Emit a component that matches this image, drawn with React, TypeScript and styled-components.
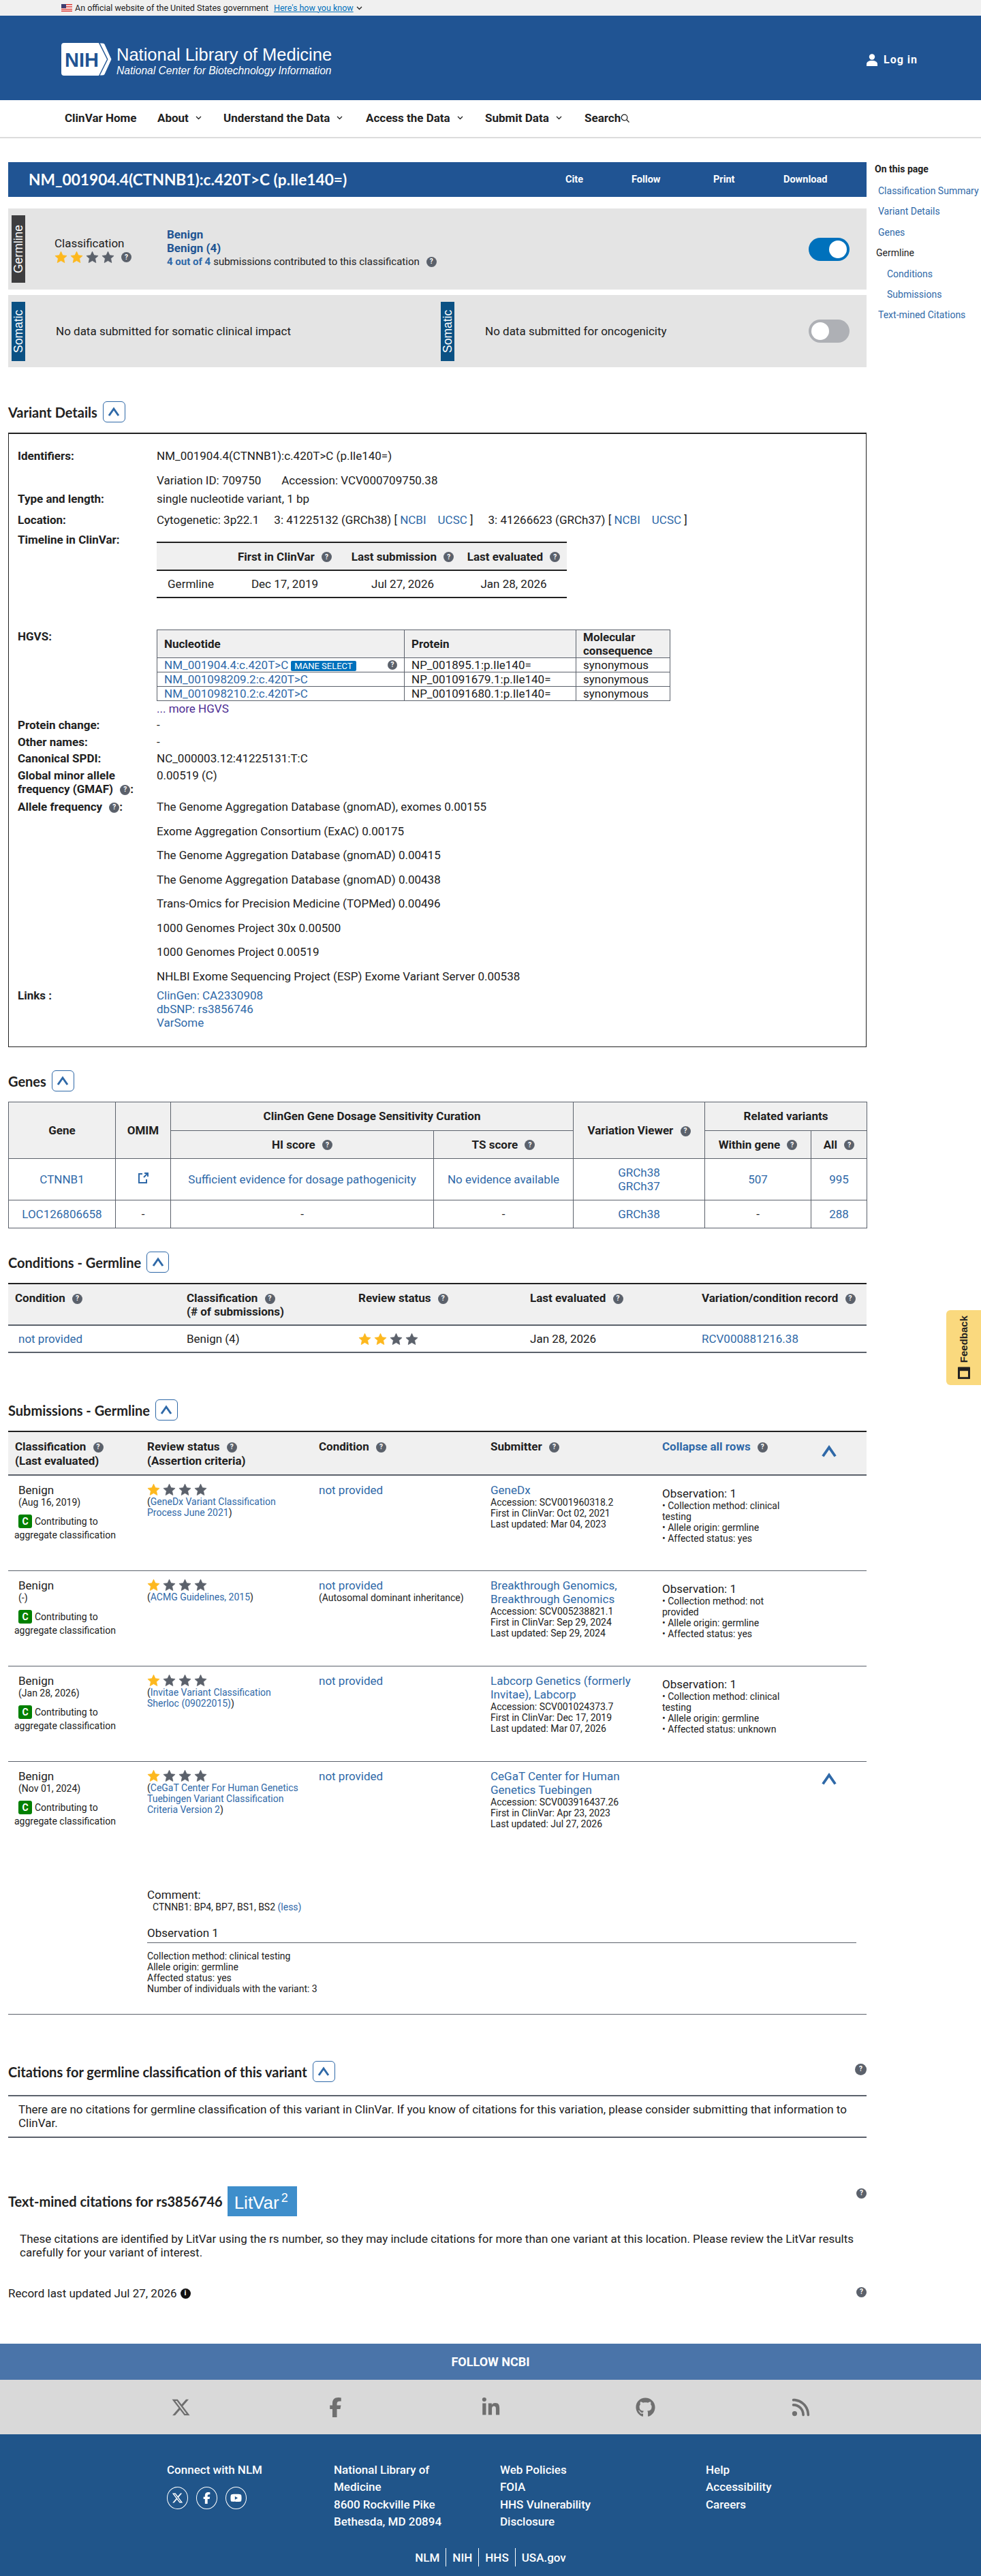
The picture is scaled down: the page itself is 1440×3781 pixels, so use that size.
import React from "react";
import styled, { createGlobalStyle } from "styled-components";
import { FaXTwitter, FaFacebookF, FaLinkedinIn, FaGithub, FaRss, FaYoutube } from "react-icons/fa6";

const GlobalStyle = createGlobalStyle`
  html, body { margin: 0; padding: 0; background: #fff; }
  body { font-family: Roboto, "Liberation Sans", sans-serif; font-size: 17px; line-height: 20px; color: #212121; }
  a { color: #2f69a8; text-decoration: none; }
  * { box-sizing: border-box; }
  table { border-collapse: collapse; }
`;

const Page = styled.div`
  position: relative;
  width: 1440px;
  height: 3781px;
  overflow: hidden;
`;

/* top of page */
const GovBanner = styled.div`
  height: 23px;
  background: #f0f0f0;
  padding-left: 90px;
  display: flex;
  align-items: center;
  gap: 4px;
  font-size: 12.5px;
  a { text-decoration: underline; color: #0071bc; margin-left: 4px; }
`;
const Header = styled.header`
  height: 124px;
  background: #205493;
  padding: 40px 93px 0 90px;
  display: flex;
  justify-content: space-between;
  color: #fff;
`;
const Brand = styled.div`
  display: flex;
  gap: 7px;
`;
const BrandText = styled.div`
  font-family: "Liberation Sans", Arial, sans-serif;
  padding-top: 3px;
`;
const BrandTitle = styled.div`
  font-size: 25.5px;
  line-height: 29px;
`;
const BrandSub = styled.div`
  font-size: 15.6px;
  line-height: 18px;
  font-style: italic;
`;
const Login = styled.div`
  display: flex;
  align-items: center;
  gap: 8px;
  height: 50px;
  font-weight: 700;
  font-size: 16px;
  letter-spacing: 1px;
`;
const Nav = styled.nav`
  height: 56px;
  border-bottom: 2px solid #dcdcdc;
  padding-left: 95px;
  display: flex;
  align-items: center;
  font-size: 17px;
  font-weight: 700;
  padding-bottom: 2px;
`;
const NavItem = styled.span<{ $w: number; $gap?: number }>`
  width: ${(p) => p.$w}px;
  display: inline-flex;
  align-items: center;
  gap: ${(p) => p.$gap ?? 10}px;
  color: #212121;
`;

/* main layout */
const Main = styled.div`
  display: grid;
  grid-template-columns: 1260px 156px;
  column-gap: 12px;
  padding: 35px 0 0 12px;
`;
const Content = styled.main`
  min-width: 0;
`;
const Side = styled.aside`
  font-size: 14px;
  white-space: nowrap;
`;
const SideTitle = styled.div`
  font-weight: 700;
  color: #212121;
  height: 20px;
  margin-bottom: 12px;
`;
const SideLink = styled.a<{ $indent: number }>`
  display: block;
  height: 30.4px;
  padding-left: ${(p) => p.$indent}px;
`;
const SidePlain = styled.div`
  height: 30.4px;
  padding-left: 2px;
`;

const TitleBar = styled.div`
  height: 51px;
  background: #205493;
  color: #fff;
  display: flex;
  align-items: center;
  padding-left: 30px;
`;
const Title = styled.h1`
  margin: 0;
  width: 788px;
  font-family: Lato, "Noto Sans", sans-serif;
  font-size: 22.7px;
  font-weight: 700;
`;
const TitleAction = styled.span<{ $w: number }>`
  width: ${(p) => p.$w}px;
  font-size: 14.5px;
  font-weight: 700;
`;

const Card = styled.section<{ $h: number; $top: number }>`
  position: relative;
  height: ${(p) => p.$h}px;
  margin-top: ${(p) => p.$top}px;
  background: #e4e4e4;
  display: flex;
  align-items: center;
  padding: 0 25px 0 5px;
`;
const SideTag = styled.div<{ $bg: string; $h: number }>`
  width: 20px;
  height: ${(p) => p.$h}px;
  flex: none;
  background: ${(p) => p.$bg};
  color: #fff;
  writing-mode: vertical-rl;
  transform: rotate(180deg);
  text-align: center;
  font-family: "Liberation Sans", Arial, sans-serif;
  font-size: 17.5px;
  line-height: 20px;
`;
const ClassBlock = styled.div`
  width: 165px;
  margin-left: 43px;
  margin-top: 2px;
`;
const ClassLabel = styled.div`
  font-size: 17px;
  line-height: 22px;
`;
const SummaryBlock = styled.div`
  flex: 1;
  margin-top: -3px;
`;
const SummaryStrong = styled.div`
  font-size: 17px;
  font-weight: 700;
  color: #205493;
  line-height: 20px;
`;
const SummaryLine = styled.div`
  display: flex;
  align-items: center;
  gap: 4px;
  font-size: 15px;
  b { color: #2f69a8; }
`;
const Toggle = styled.div<{ $on: boolean }>`
  width: 60px;
  height: 34px;
  border-radius: 17px;
  flex: none;
  display: flex;
  align-items: center;
  padding: 0 4px;
  justify-content: ${(p) => (p.$on ? "flex-end" : "flex-start")};
  background: ${(p) => (p.$on ? "#0071bc" : "#aeb0b5")};
  &::after {
    content: "";
    width: 26px;
    height: 26px;
    border-radius: 50%;
    background: #fff;
  }
`;
const NoData = styled.div<{ $w: number }>`
  margin-left: 45px;
  width: ${(p) => p.$w}px;
`;

/* shared bits */
const HelpDot = styled.span<{ $s?: number }>`
  display: inline-flex;
  width: ${(p) => p.$s ?? 15}px;
  height: ${(p) => p.$s ?? 15}px;
  flex: none;
  border-radius: 50%;
  background: #5b616b;
  color: #fff;
  font-family: Roboto, sans-serif;
  font-size: 10px;
  font-weight: 700;
  line-height: 1;
  align-items: center;
  justify-content: center;
  vertical-align: 2px;
  margin-left: 6px;
`;
const Help = ({ s }: { s?: number }) => <HelpDot $s={s}>?</HelpDot>;

const StarRow = styled.div`
  display: flex;
  align-items: center;
  gap: 4px;
  height: 19px;
`;
const Star = ({ on }: { on: boolean }) => (
  <svg width="19" height="19" viewBox="0 0 24 24">
    <path
      d="M12 1.5l3.2 7 7.6.9-5.6 5.200 1.500 7.600L12 18.400l-6.700 3.800 1.500-7.600L1.200 9.400l7.600-.9z"
      fill={on ? "#fdb81e" : "#5b616b"}
      stroke={on ? "#fdb81e" : "#5b616b"}
      strokeLinejoin="round"
    />
  </svg>
);
const Stars = ({ n }: { n: number }) => (
  <>
    {[0, 1, 2, 3].map((i) => (
      <Star key={i} on={i < n} />
    ))}
  </>
);

const SectionHead = styled.div<{ $top: number }>`
  display: flex;
  align-items: center;
  height: 31px;
  margin-top: ${(p) => p.$top}px;
  position: relative;
`;
const SectionTitle = styled.h2`
  margin: 0;
  font-family: Lato, "Noto Sans", sans-serif;
  font-size: 20px;
  font-weight: 700;
  color: #212121;
`;
const CollapseBtn = styled.span`
  width: 33px;
  height: 31px;
  margin-left: 8px;
  border: 1px solid #2f69a8;
  border-radius: 6px;
  display: flex;
  align-items: center;
  justify-content: center;
`;
const Chevron = ({ size = 20 }: { size?: number }) => (
  <svg width={size} height={size} viewBox="0 0 20 20" fill="none">
    <path d="M3 15L10 5l7 10" stroke="#2f69a8" strokeWidth="3" />
  </svg>
);
const Collapse = () => (
  <CollapseBtn>
    <Chevron />
  </CollapseBtn>
);
const CornerHelp = styled.span<{ $top: number }>`
  position: absolute;
  right: 0;
  top: ${(p) => p.$top}px;
`;

/* variant details */
const DetailBox = styled.div`
  margin-top: 15px;
  height: 902px;
  border: 1px solid #212121;
  border-top-width: 2px;
  padding: 22px 0 0 13px;
`;
const DetailRow = styled.div<{ $top?: number }>`
  display: grid;
  grid-template-columns: 204px 1fr;
  margin-top: ${(p) => p.$top ?? 0}px;
`;
const DetailLabel = styled.div`
  font-weight: 700;
`;
const Spaced = styled.div<{ $gap: number }>`
  display: flex;
  flex-direction: column;
  gap: ${(p) => p.$gap}px;
`;
const Gapped = styled.span<{ $w: number }>`
  display: inline-block;
  width: ${(p) => p.$w}px;
`;
const TimelineTable = styled.table`
  margin-top: 13px;
  width: 602px;
  table-layout: fixed;
  border-top: 2px solid #212121;
  border-bottom: 2px solid #212121;
  th { background: #f0f0f0; height: 41px; font-weight: 700; text-align: center; padding: 0; white-space: nowrap; }
  tr:first-child { border-bottom: 2px solid #212121; }
  td { height: 40px; text-align: center; padding: 0; }
`;
const HgvsTable = styled.table`
  width: 753px;
  table-layout: fixed;
  th, td { border: 1px solid #5b616b; padding: 0 10px; text-align: left; height: 21px; line-height: 20px; white-space: nowrap; }
  th { background: #f0f0f0; height: 41px; white-space: normal; }
`;
const ManeCell = styled.div`
  display: flex;
  align-items: center;
  justify-content: space-between;
`;
const Mane = styled.span`
  background: #0071bc;
  color: #fff;
  font-size: 13px;
  line-height: 15px;
  padding: 0 5px;
  margin-left: 4px;
  border-radius: 2px;
  display: inline-block;
`;
const MoreLink = styled.a`
  color: #4c2c92;
  display: block;
  height: 20px;
  margin-top: 1px;
`;

/* genes and conditions */
const GenesTable = styled.table`
  margin-top: 15px;
  width: 1260px;
  table-layout: fixed;
  border: 1px solid #5b616b;
  th, td { border: 1px solid #5b616b; text-align: center; padding: 0; }
  th { background: #f0f0f0; font-weight: 700; white-space: nowrap; }
  thead tr { height: 41.500px; }
`;
const ViewerLink = styled.a`
  display: block;
`;
const ConditionsTable = styled.table`
  margin-top: 15px;
  width: 1260px;
  table-layout: fixed;
  border-top: 2px solid #212121;
  border-bottom: 2px solid #5b616b;
  th { background: #f0f0f0; text-align: left; vertical-align: top; padding: 10px 10px 0; height: 61px; font-weight: 700; border-bottom: 2px solid #5b616b; white-space: nowrap; }
  td { height: 40px; padding: 0 10px; }
  td:first-child { padding-left: 15px; }
`;
const Feedback = styled.div`
  position: absolute;
  left: 1389px;
  top: 1923px;
  width: 51px;
  height: 110px;
  background: #fad97e;
  border-radius: 6px 0 0 6px;
  display: flex;
  align-items: center;
  justify-content: center;
  writing-mode: vertical-rl;
  font-family: "Liberation Sans", Arial, sans-serif;
  font-weight: 700;
  font-size: 15px;
  color: #212121;
`;
const FeedbackInner = styled.span`
  transform: rotate(180deg);
  display: inline-flex;
  align-items: center;
  gap: 6px;
`;

/* submissions */
const SubHeader = styled.div`
  margin-top: 15px;
  height: 66px;
  background: #f0f0f0;
  border-top: 2px solid #212121;
  border-bottom: 2px solid #5b616b;
  font-weight: 700;
  display: grid;
  grid-template-columns: 204px 252px 252px 252px 1fr;
  padding-top: 11px;
  position: relative;
`;
const SubHeadCell = styled.div<{ $pad?: number }>`
  padding-left: ${(p) => p.$pad ?? 0}px;
  line-height: 21px;
  white-space: nowrap;
`;
const CollapseAll = styled.a`
  font-weight: 700;
`;
const RowChevron = styled.span<{ $top: number }>`
  position: absolute;
  left: 1192px;
  top: ${(p) => p.$top}px;
`;
const SubRow = styled.div<{ $h: number }>`
  position: relative;
  height: ${(p) => p.$h}px;
  border-bottom: 1px solid #5b616b;
  padding-top: 11px;
`;
const SubGrid = styled.div`
  display: grid;
  grid-template-columns: 204px 252px 252px 252px 1fr;
`;
const ClassCell = styled.div`
  padding-left: 9px;
  font-size: 14px;
`;
const BenignLine = styled.div`
  padding-left: 6px;
  font-size: 17px;
  line-height: 20px;
`;
const DateLine = styled.div`
  padding-left: 6px;
  font-size: 14px;
  line-height: 16px;
`;
const BadgeRow = styled.div`
  display: flex;
  align-items: center;
  gap: 4px;
  height: 20px;
  margin: 10px 0 0 6px;
`;
const Badge = styled.span`
  width: 20px;
  height: 20px;
  border-radius: 3px;
  background: #008000;
  color: #fff;
  font-weight: 700;
  text-align: center;
  line-height: 20px;
`;
const BadgeTail = styled.div`
  line-height: 21px;
`;
const SmallBlock = styled.div<{ $w?: number }>`
  font-size: 14px;
  line-height: 16px;
  width: ${(p) => (p.$w ? `${p.$w}px` : "auto")};
`;
const SubmitterLink = styled.a`
  display: block;
  line-height: 20px;
  width: 215px;
`;
const CondLink = styled.a`
  display: block;
  height: 20px;
`;
const Observation = styled.div`
  font-size: 14px;
  line-height: 16px;
  width: 190px;
  padding-top: 5px;
  h4 { margin: 0; font-size: 17px; font-weight: 400; line-height: 20px; }
`;
const Expanded = styled.div`
  margin: 86px 15px 0 204px;
`;
const CommentTitle = styled.div`
  line-height: 20px;
`;
const CommentBody = styled.div`
  font-size: 14px;
  line-height: 16px;
  padding-left: 8px;
`;
const ObsTitle = styled.div`
  line-height: 20px;
  margin-top: 20px;
  padding-bottom: 4px;
  border-bottom: 1px solid #5b616b;
`;
const ObsLines = styled.div`
  font-size: 14px;
  line-height: 16px;
  margin-top: 11px;
`;

/* citations */
const Rule = styled.div`
  border-top: 2px solid #5b616b;
  border-bottom: 2px solid #5b616b;
  margin-top: 19px;
  height: 63px;
  padding: 9px 15px;
`;
const LitHead = styled.div`
  display: flex;
  align-items: center;
  height: 44px;
  margin-top: 71px;
  position: relative;
`;
const LitVar = styled.div`
  margin-left: 7px;
  width: 102px;
  height: 44px;
  background: #3e8ecb;
  color: #fff;
  font-family: "Liberation Sans", Arial, sans-serif;
  font-size: 26px;
  line-height: 48px;
  padding-left: 10px;
  white-space: nowrap;
  sup { font-size: 18px; line-height: 0; vertical-align: 10px; margin-left: 3px; }
`;
const LitText = styled.p`
  margin: 23px 0 0;
  padding-left: 17px;
`;
const Updated = styled.div`
  position: relative;
  margin-top: 40px;
  display: flex;
  align-items: center;
`;
const InfoDot = styled.span`
  width: 15px;
  height: 15px;
  margin-left: 5px;
  background: #111;
  color: #fff;
  border-radius: 50%;
  font-size: 11px;
  font-weight: 700;
  display: flex;
  align-items: center;
  justify-content: center;
`;

/* footer */
const Footer = styled.footer`
  position: absolute;
  left: 0;
  right: 0;
  top: 3440px;
`;
const FollowBand = styled.div`
  height: 53px;
  background: #4a74a9;
  color: #fff;
  font-size: 18px;
  font-weight: 700;
  display: flex;
  align-items: center;
  justify-content: center;
`;
const SocialBand = styled.div`
  height: 80px;
  background: #d9d9d9;
  display: grid;
  grid-template-columns: repeat(5, 227.500px);
  justify-content: center;
  align-items: center;
  justify-items: center;
  color: #6f6f6f;
  font-size: 29px;
`;
const NlmFooter = styled.div`
  height: 208px;
  background: #20558a;
  color: #fff;
  padding: 40px 0 0 245px;
  font-weight: 500;
`;
const FooterCols = styled.div`
  display: grid;
  grid-template-columns: 245px 244px 302px 200px;
  line-height: 25.300px;
`;
const AddressCol = styled.div`
  width: 190px;
`;
const CircleRow = styled.div`
  display: flex;
  gap: 12px;
  margin-top: 12px;
`;
const Circle = styled.span`
  width: 31px;
  height: 33px;
  border: 1px solid #fff;
  border-radius: 50%;
  display: flex;
  align-items: center;
  justify-content: center;
  font-size: 17px;
`;
const BottomLinks = styled.div`
  margin: 26px 0 0 -245px;
  display: flex;
  justify-content: center;
  span { padding: 3px 9px; height: 27px; border-left: 1px solid #fff; line-height: 22px; }
  span:first-child { border-left: 0; }
`;

const NihLogo = () => (
  <svg width="74" height="48" viewBox="0 0 74 48">
    <path d="M4 0h51l-.1.1L67 24 55 48H4a4 4 0 0 1-4-4V4a4 4 0 0 1 4-4z" fill="#fff" />
    <path d="M56 0h4c2 0 3 1 4 2l10 22-10 22c-1 1-2 2-4 2h-4l12-24z" fill="#fff" stroke="#205493" strokeWidth="1" />
    <text x="5" y="35" fontFamily="Liberation Sans, Arial, sans-serif" fontWeight="700" fontSize="29" fill="#205493">NIH</text>
  </svg>
);
const Flag = () => (
  <svg width="16" height="11" viewBox="0 0 16 11">
    <rect width="16" height="11" fill="#fff" />
    <path d="M0 .8h16M0 4.100h16M0 7.400h16M0 10.200h16" stroke="#d83933" strokeWidth="1.500" />
    <rect width="7" height="6" fill="#3c3b6e" />
  </svg>
);
const Caret = () => (
  <svg width="9" height="6" viewBox="0 0 9 6" fill="none">
    <path d="M1 1l3.500 3.500L8 1" stroke="#212121" strokeWidth="1.300" />
  </svg>
);
const UserIcon = () => (
  <svg width="18" height="18" viewBox="0 0 18 18" fill="#fff">
    <circle cx="9" cy="4.500" r="4.200" />
    <path d="M1 18v-3c0-3 3-5 8-5s8 2 8 5v3z" />
  </svg>
);
const SearchIcon = () => (
  <svg width="13" height="13" viewBox="0 0 13 13" fill="none" stroke="#212121" strokeWidth="1.200">
    <circle cx="5.500" cy="5.500" r="4.300" />
    <path d="M8.500 8.500L12.500 12.500" />
  </svg>
);
const ExternalIcon = () => (
  <svg width="18" height="18" viewBox="0 0 18 18" fill="none" stroke="#2f69a8" strokeWidth="2">
    <path d="M8 3H3v13h11v-5M10 8l6-6M11 2h5v5" />
  </svg>
);
const ChatIcon = () => (
  <svg width="18" height="18" viewBox="0 0 18 18">
    <rect x="0" y="0" width="18" height="18" rx="1" fill="#212121" />
    <rect x="3" y="3" width="12" height="9" fill="#fad97e" />
  </svg>
);

const submissions = [
  {
    date: "(Aug 16, 2019)",
    crit: "GeneDx Variant Classification Process June 2021",
    condNote: "",
    submitter: "GeneDx",
    acc: "SCV001960318.2",
    first: "Oct 02, 2021",
    updated: "Mar 04, 2023",
    method: "clinical testing",
    status: "yes",
  },
  {
    date: "(-)",
    crit: "ACMG Guidelines, 2015",
    condNote: "(Autosomal dominant inheritance)",
    submitter: "Breakthrough Genomics, Breakthrough Genomics",
    acc: "SCV005238821.1",
    first: "Sep 29, 2024",
    updated: "Sep 29, 2024",
    method: "not provided",
    status: "yes",
  },
  {
    date: "(Jan 28, 2026)",
    crit: "Invitae Variant Classification Sherloc (09022015)",
    condNote: "",
    submitter: "Labcorp Genetics (formerly Invitae), Labcorp",
    acc: "SCV001024373.7",
    first: "Dec 17, 2019",
    updated: "Mar 07, 2026",
    method: "clinical testing",
    status: "unknown",
  },
];

const frequencies = [
  "The Genome Aggregation Database (gnomAD), exomes 0.00155",
  "Exome Aggregation Consortium (ExAC) 0.00175",
  "The Genome Aggregation Database (gnomAD) 0.00415",
  "The Genome Aggregation Database (gnomAD) 0.00438",
  "Trans-Omics for Precision Medicine (TOPMed) 0.00496",
  "1000 Genomes Project 30x 0.00500",
  "1000 Genomes Project 0.00519",
  "NHLBI Exome Sequencing Project (ESP) Exome Variant Server 0.00538",
];

const ClassColumn = ({ date }: { date: string }) => (
  <ClassCell>
    <BenignLine>Benign</BenignLine>
    <DateLine>{date}</DateLine>
    <BadgeRow>
      <Badge>C</Badge>
      <span>Contributing to</span>
    </BadgeRow>
    <BadgeTail>aggregate classification</BadgeTail>
  </ClassCell>
);

export default function App() {
  return (
    <Page>
      <GlobalStyle />
      <GovBanner>
        <Flag />
        An official website of the United States government
        <a>Here's how you know</a>
        <Caret />
      </GovBanner>
      <Header>
        <Brand>
          <NihLogo />
          <BrandText>
            <BrandTitle>National Library of Medicine</BrandTitle>
            <BrandSub>National Center for Biotechnology Information</BrandSub>
          </BrandText>
        </Brand>
        <Login>
          <UserIcon />
          Log in
        </Login>
      </Header>
      <Nav>
        <NavItem $w={136}>ClinVar Home</NavItem>
        <NavItem $w={97}>About <Caret /></NavItem>
        <NavItem $w={209}>Understand the Data <Caret /></NavItem>
        <NavItem $w={175}>Access the Data <Caret /></NavItem>
        <NavItem $w={146}>Submit Data <Caret /></NavItem>
        <NavItem $w={90} $gap={0}>Search<SearchIcon /></NavItem>
      </Nav>

      <Main>
        <Content>
          <TitleBar>
            <Title>NM_001904.4(CTNNB1):c.420T&gt;C (p.Ile140=)</Title>
            <TitleAction $w={97}>Cite</TitleAction>
            <TitleAction $w={120}>Follow</TitleAction>
            <TitleAction $w={103}>Print</TitleAction>
            <TitleAction $w={70}>Download</TitleAction>
          </TitleBar>

          <Card $h={119} $top={17}>
            <SideTag $bg="#3d3d3f" $h={99}>Germline</SideTag>
            <ClassBlock>
              <ClassLabel>Classification</ClassLabel>
              <StarRow>
                <Stars n={2} />
                <Help />
              </StarRow>
            </ClassBlock>
            <SummaryBlock>
              <SummaryStrong>Benign</SummaryStrong>
              <SummaryStrong>Benign (4)</SummaryStrong>
              <SummaryLine>
                <b>4 out of 4</b> submissions contributed to this classification <Help />
              </SummaryLine>
            </SummaryBlock>
            <Toggle $on />
          </Card>
          <Card $h={106} $top={8}>
            <SideTag $bg="#0b5184" $h={87}>Somatic</SideTag>
            <NoData $w={565}>No data submitted for somatic clinical impact</NoData>
            <SideTag $bg="#0b5184" $h={87}>Somatic</SideTag>
            <NoData $w={475}>No data submitted for oncogenicity</NoData>
            <Toggle $on={false} />
          </Card>

          <SectionHead $top={50}>
            <SectionTitle>Variant Details</SectionTitle>
            <Collapse />
          </SectionHead>
          <DetailBox>
            <DetailRow>
              <DetailLabel>Identifiers:</DetailLabel>
              <Spaced $gap={16}>
                <div>NM_001904.4(CTNNB1):c.420T&gt;C (p.Ile140=)</div>
                <div>Variation ID: 709750<Gapped $w={30} />Accession: VCV000709750.38</div>
              </Spaced>
            </DetailRow>
            <DetailRow $top={7}>
              <DetailLabel>Type and length:</DetailLabel>
              <div>single nucleotide variant, 1 bp</div>
            </DetailRow>
            <DetailRow $top={11}>
              <DetailLabel>Location:</DetailLabel>
              <div>
                Cytogenetic: 3p22.1<Gapped $w={22} />3: 41225132 (GRCh38) [ <a>NCBI</a><Gapped $w={17} /><a>UCSC</a> ]
                <Gapped $w={22} />3: 41266623 (GRCh37) [ <a>NCBI</a><Gapped $w={17} /><a>UCSC</a> ]
              </div>
            </DetailRow>
            <DetailRow $top={9}>
              <DetailLabel>Timeline in ClinVar:</DetailLabel>
              <TimelineTable>
                <colgroup>
                  <col width="100" /><col width="176" /><col width="170" /><col width="156" />
                </colgroup>
                <tbody>
                  <tr>
                    <th></th>
                    <th>First in ClinVar <Help /></th>
                    <th>Last submission <Help /></th>
                    <th>Last evaluated <Help /></th>
                  </tr>
                  <tr>
                    <td>Germline</td>
                    <td>Dec 17, 2019</td>
                    <td>Jul 27, 2026</td>
                    <td>Jan 28, 2026</td>
                  </tr>
                </tbody>
              </TimelineTable>
            </DetailRow>
            <DetailRow $top={46}>
              <DetailLabel>HGVS:</DetailLabel>
              <div>
                <HgvsTable>
                  <colgroup>
                    <col width="363" /><col width="252" /><col width="138" />
                  </colgroup>
                  <tbody>
                    <tr>
                      <th>Nucleotide</th>
                      <th>Protein</th>
                      <th>Molecular consequence</th>
                    </tr>
                    <tr>
                      <td>
                        <ManeCell>
                          <span><a>NM_001904.4:c.420T&gt;C</a><Mane>MANE SELECT</Mane></span>
                          <Help s={14} />
                        </ManeCell>
                      </td>
                      <td>NP_001895.1:p.Ile140=</td>
                      <td>synonymous</td>
                    </tr>
                    <tr>
                      <td><a>NM_001098209.2:c.420T&gt;C</a></td>
                      <td>NP_001091679.1:p.Ile140=</td>
                      <td>synonymous</td>
                    </tr>
                    <tr>
                      <td><a>NM_001098210.2:c.420T&gt;C</a></td>
                      <td>NP_001091680.1:p.Ile140=</td>
                      <td>synonymous</td>
                    </tr>
                  </tbody>
                </HgvsTable>
                <MoreLink>... more HGVS</MoreLink>
              </div>
            </DetailRow>
            <DetailRow $top={4}>
              <DetailLabel>Protein change:</DetailLabel>
              <div>-</div>
            </DetailRow>
            <DetailRow $top={5}>
              <DetailLabel>Other names:</DetailLabel>
              <div>-</div>
            </DetailRow>
            <DetailRow $top={4}>
              <DetailLabel>Canonical SPDI:</DetailLabel>
              <div>NC_000003.12:41225131:T:C</div>
            </DetailRow>
            <DetailRow $top={5}>
              <DetailLabel>
                <div>Global minor allele</div>
                <div>frequency (GMAF) <Help />:</div>
              </DetailLabel>
              <div>0.00519 (C)</div>
            </DetailRow>
            <DetailRow $top={6}>
              <DetailLabel>Allele frequency <Help />:</DetailLabel>
              <Spaced $gap={15.5}>
                {frequencies.map((f, i) => (
                  <div key={i}>{f}</div>
                ))}
              </Spaced>
            </DetailRow>
            <DetailRow $top={8}>
              <DetailLabel>Links :</DetailLabel>
              <div>
                <div><a>ClinGen: CA2330908</a></div>
                <div><a>dbSNP: rs3856746</a></div>
                <div><a>VarSome</a></div>
              </div>
            </DetailRow>
          </DetailBox>

          <SectionHead $top={34}>
            <SectionTitle>Genes</SectionTitle>
            <Collapse />
          </SectionHead>
          <GenesTable>
            <colgroup>
              <col width="157" /><col width="81" /><col width="386" /><col width="205" /><col width="193" /><col width="156" /><col width="82" />
            </colgroup>
            <thead>
              <tr>
                <th rowSpan={2}>Gene</th>
                <th rowSpan={2}>OMIM</th>
                <th colSpan={2}>ClinGen Gene Dosage Sensitivity Curation</th>
                <th rowSpan={2}>Variation Viewer <Help /></th>
                <th colSpan={2}>Related variants</th>
              </tr>
              <tr>
                <th>HI score <Help /></th>
                <th>TS score <Help /></th>
                <th>Within gene <Help /></th>
                <th>All <Help /></th>
              </tr>
            </thead>
            <tbody>
              <tr style={{ height: 61 }}>
                <td><a>CTNNB1</a></td>
                <td><ExternalIcon /></td>
                <td><a>Sufficient evidence for dosage pathogenicity</a></td>
                <td><a>No evidence available</a></td>
                <td><ViewerLink>GRCh38</ViewerLink><ViewerLink>GRCh37</ViewerLink></td>
                <td><a>507</a></td>
                <td><a>995</a></td>
              </tr>
              <tr style={{ height: 41 }}>
                <td><a>LOC126806658</a></td>
                <td>-</td>
                <td>-</td>
                <td>-</td>
                <td><a>GRCh38</a></td>
                <td>-</td>
                <td><a>288</a></td>
              </tr>
            </tbody>
          </GenesTable>

          <SectionHead $top={34}>
            <SectionTitle>Conditions - Germline</SectionTitle>
            <Collapse />
          </SectionHead>
          <ConditionsTable>
            <tbody>
              <tr>
                <th>Condition <Help /></th>
                <th>
                  <div>Classification <Help /></div>
                  <div>(# of submissions)</div>
                </th>
                <th>Review status <Help /></th>
                <th>Last evaluated <Help /></th>
                <th>Variation/condition record <Help /></th>
              </tr>
              <tr>
                <td><a>not provided</a></td>
                <td>Benign (4)</td>
                <td><StarRow><Stars n={2} /></StarRow></td>
                <td>Jan 28, 2026</td>
                <td><a>RCV000881216.38</a></td>
              </tr>
            </tbody>
          </ConditionsTable>

          <SectionHead $top={68}>
            <SectionTitle>Submissions - Germline</SectionTitle>
            <Collapse />
          </SectionHead>
          <SubHeader>
            <SubHeadCell $pad={10}>
              <div>Classification <Help /></div>
              <div>(Last evaluated)</div>
            </SubHeadCell>
            <SubHeadCell>
              <div>Review status <Help /></div>
              <div>(Assertion criteria)</div>
            </SubHeadCell>
            <SubHeadCell>Condition <Help /></SubHeadCell>
            <SubHeadCell>Submitter <Help /></SubHeadCell>
            <SubHeadCell><CollapseAll>Collapse all rows</CollapseAll> <Help /></SubHeadCell>
            <RowChevron $top={16}><Chevron size={26} /></RowChevron>
          </SubHeader>
          {submissions.map((s) => (
            <SubRow $h={140} key={s.acc}>
              <SubGrid>
                <ClassColumn date={s.date} />
                <div>
                  <StarRow><Stars n={1} /></StarRow>
                  <SmallBlock $w={205}>(<a>{s.crit}</a>)</SmallBlock>
                </div>
                <div>
                  <CondLink>not provided</CondLink>
                  <SmallBlock>{s.condNote}</SmallBlock>
                </div>
                <div>
                  <SubmitterLink>{s.submitter}</SubmitterLink>
                  <SmallBlock>
                    <div>Accession: {s.acc}</div>
                    <div>First in ClinVar: {s.first}</div>
                    <div>Last updated: {s.updated}</div>
                  </SmallBlock>
                </div>
                <Observation>
                  <h4>Observation: 1</h4>
                  <div>• Collection method: {s.method}</div>
                  <div>• Allele origin: germline</div>
                  <div>• Affected status: {s.status}</div>
                </Observation>
              </SubGrid>
            </SubRow>
          ))}
          <SubRow $h={371}>
            <SubGrid>
              <ClassColumn date="(Nov 01, 2024)" />
              <div>
                <StarRow><Stars n={1} /></StarRow>
                <SmallBlock $w={225}>
                  (<a>CeGaT Center For Human Genetics Tuebingen Variant Classification Criteria Version 2</a>)
                </SmallBlock>
              </div>
              <div><CondLink>not provided</CondLink></div>
              <div>
                <SubmitterLink>CeGaT Center for Human Genetics Tuebingen</SubmitterLink>
                <SmallBlock>
                  <div>Accession: SCV003916437.26</div>
                  <div>First in ClinVar: Apr 23, 2023</div>
                  <div>Last updated: Jul 27, 2026</div>
                </SmallBlock>
              </div>
            </SubGrid>
            <RowChevron $top={13}><Chevron size={26} /></RowChevron>
            <Expanded>
              <CommentTitle>Comment:</CommentTitle>
              <CommentBody>CTNNB1: BP4, BP7, BS1, BS2 <a>(less)</a></CommentBody>
              <ObsTitle>Observation 1</ObsTitle>
              <ObsLines>
                <div>Collection method: clinical testing</div>
                <div>Allele origin: germline</div>
                <div>Affected status: yes</div>
                <div>Number of individuals with the variant: 3</div>
              </ObsLines>
            </Expanded>
          </SubRow>

          <SectionHead $top={68}>
            <SectionTitle>Citations for germline classification of this variant</SectionTitle>
            <Collapse />
            <CornerHelp $top={1}><Help s={17} /></CornerHelp>
          </SectionHead>
          <Rule>
            There are no citations for germline classification of this variant in ClinVar. If you know of citations for this variation, please consider submitting that information to ClinVar.
          </Rule>
          <LitHead>
            <SectionTitle>Text-mined citations for rs3856746</SectionTitle>
            <LitVar>LitVar<sup>2</sup></LitVar>
            <CornerHelp $top={-1}><Help /></CornerHelp>
          </LitHead>
          <LitText>
            These citations are identified by LitVar using the rs number, so they may include citations for more than one variant at this location. Please review the LitVar results carefully for your variant of interest.
          </LitText>
          <Updated>
            Record last updated Jul 27, 2026 <InfoDot>i</InfoDot>
            <CornerHelp $top={-3}><Help /></CornerHelp>
          </Updated>
        </Content>
        <Side>
          <SideTitle>On this page</SideTitle>
          <SideLink $indent={5}>Classification Summary</SideLink>
          <SideLink $indent={5}>Variant Details</SideLink>
          <SideLink $indent={5}>Genes</SideLink>
          <SidePlain>Germline</SidePlain>
          <SideLink $indent={18}>Conditions</SideLink>
          <SideLink $indent={18}>Submissions</SideLink>
          <SideLink $indent={5}>Text-mined Citations</SideLink>
        </Side>
      </Main>

      <Feedback>
        <FeedbackInner>
          <ChatIcon />
          Feedback
        </FeedbackInner>
      </Feedback>

      <Footer>
        <FollowBand>FOLLOW NCBI</FollowBand>
        <SocialBand>
          <FaXTwitter />
          <FaFacebookF />
          <FaLinkedinIn />
          <FaGithub />
          <FaRss />
        </SocialBand>
        <NlmFooter>
          <FooterCols>
            <div>
              Connect with NLM
              <CircleRow>
                <Circle><FaXTwitter /></Circle>
                <Circle><FaFacebookF /></Circle>
                <Circle><FaYoutube /></Circle>
              </CircleRow>
            </div>
            <AddressCol>National Library of Medicine<br />8600 Rockville Pike<br />Bethesda, MD 20894</AddressCol>
            <div>Web Policies<br />FOIA<br />HHS Vulnerability<br />Disclosure</div>
            <div>Help<br />Accessibility<br />Careers</div>
          </FooterCols>
          <BottomLinks>
            <span>NLM</span><span>NIH</span><span>HHS</span><span>USA.gov</span>
          </BottomLinks>
        </NlmFooter>
      </Footer>
    </Page>
  );
}
